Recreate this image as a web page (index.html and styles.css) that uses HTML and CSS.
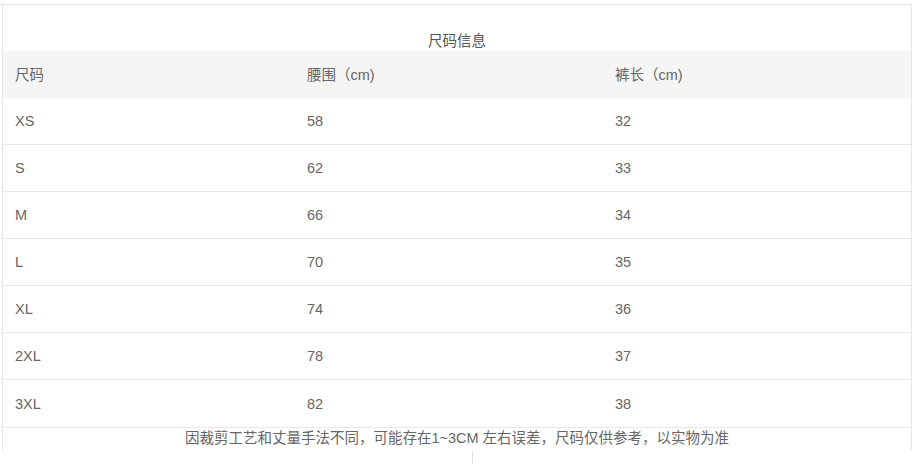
FILE: index.html
```html
<!DOCTYPE html>
<html lang="zh-CN">
<head>
<meta charset="utf-8">
<title>尺码信息</title>
<link rel="stylesheet" href="styles.css">
</head>
<body>
<div class="top-rule"></div>
<section class="size-box">
  <div class="size-title">尺码信息</div>
  <table class="size-table">
    <colgroup>
      <col class="c1"><col class="c2"><col class="c3">
    </colgroup>
    <thead>
      <tr><th>尺码</th><th>腰围（cm)</th><th>裤长（cm)</th></tr>
    </thead>
    <tbody>
      <tr><td>XS</td><td>58</td><td>32</td></tr>
      <tr><td>S</td><td>62</td><td>33</td></tr>
      <tr><td>M</td><td>66</td><td>34</td></tr>
      <tr><td>L</td><td>70</td><td>35</td></tr>
      <tr><td>XL</td><td>74</td><td>36</td></tr>
      <tr><td>2XL</td><td>78</td><td>37</td></tr>
      <tr class="last"><td>3XL</td><td>82</td><td>38</td></tr>
    </tbody>
  </table>
  <div class="size-note">因裁剪工艺和丈量手法不同，可能存在1~3CM 左右误差，尺码仅供参考，以实物为准</div>
</section>
<div class="below">
  <div class="divider"></div>
</div>
</body>
</html>
```

FILE: styles.css
```css
html, body {
  margin: 0;
  padding: 0;
  background: #fff;
}
body {
  font-family: "Liberation Sans", "Noto Sans CJK SC", sans-serif;
  font-size: 14.5px;
  color: #666;
}
.top-rule {
  height: 4px;
  width: 912px;
  border-bottom: 1px solid #e6e6e6;
}
.size-box {
  margin-left: 2px;
  width: 908px;
  border-left: 1px solid #e6e6e6;
  border-right: 1px solid #e6e6e6;
}
.size-title {
  height: 46px;
  box-sizing: border-box;
  padding-top: 26px;
  line-height: 20px;
  text-align: center;
  color: #555;
}
.size-table {
  width: 908px;
  border-collapse: collapse;
  table-layout: fixed;
}
.size-table .c1 { width: 292px; }
.size-table .c2 { width: 308px; }
.size-table .c3 { width: 308px; }
.size-table th {
  background: #f5f5f5;
  font-weight: normal;
  text-align: left;
  height: 47px;
  padding: 0 12px;
  line-height: 20px;
  color: #666;
}
.size-table td {
  height: 46px;
  padding: 0 12px;
  line-height: 20px;
  border-bottom: 1px solid #e8e8e8;
  color: #666;
}
.size-table .last td {
  height: 47px;
}
.size-note {
  height: 22px;
  line-height: 20px;
  text-align: center;
  color: #666;
}
.below {
  display: flex;
  padding-left: 472px;
}
.divider {
  width: 1px;
  height: 20px;
  background: #e3e3e3;
  margin-top: 1px;
}
```
